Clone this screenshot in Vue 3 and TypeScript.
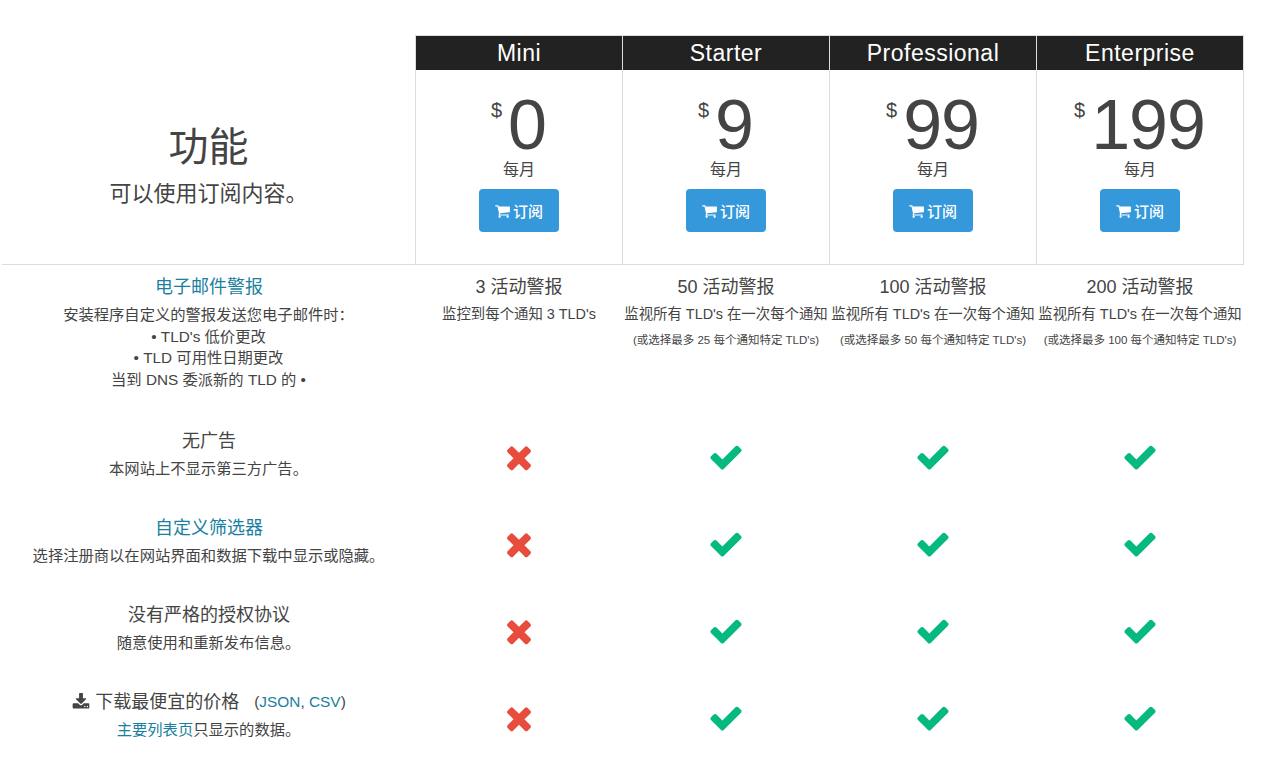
<script setup lang="ts">
interface Plan { name: string; price: string; alert: string; note: string; small?: string }
interface Row { title: string; link?: boolean; desc: string }

const plans: Plan[] = [
  { name: 'Mini', price: '0', alert: '3 活动警报', note: "监控到每个通知 3 TLD's" },
  { name: 'Starter', price: '9', alert: '50 活动警报', note: "监视所有 TLD's 在一次每个通知", small: "(或选择最多 25 每个通知特定 TLD's)" },
  { name: 'Professional', price: '99', alert: '100 活动警报', note: "监视所有 TLD's 在一次每个通知", small: "(或选择最多 50 每个通知特定 TLD's)" },
  { name: 'Enterprise', price: '199', alert: '200 活动警报', note: "监视所有 TLD's 在一次每个通知", small: "(或选择最多 100 每个通知特定 TLD's)" },
]
const rows: Row[] = [
  { title: '无广告', desc: '本网站上不显示第三方广告。' },
  { title: '自定义筛选器', link: true, desc: '选择注册商以在网站界面和数据下载中显示或隐藏。' },
  { title: '没有严格的授权协议', desc: '随意使用和重新发布信息。' },
]
const checks = [1, 2, 3]
</script>

<template>
  <div class="page">
    <div class="table">
      <div class="corner"></div>
      <div v-for="p in plans" :key="p.name" class="plan-name">{{ p.name }}</div>

      <div class="intro">
        <div class="intro-title">功能</div>
        <div class="intro-sub">可以使用订阅内容。</div>
      </div>
      <div v-for="p in plans" :key="p.name" class="price-cell">
        <div class="price"><sup class="cur">$</sup><span class="amount">{{ p.price }}</span></div>
        <div class="per">每月</div>
        <a class="btn">
          <svg class="cart" viewBox="0 0 1664 1792"><path fill="currentColor" d="M640 1536q0 52-38 90t-90 38-90-38-38-90 38-90 90-38 90 38 38 90zm896 0q0 52-38 90t-90 38-90-38-38-90 38-90 90-38 90 38 38 90zm128-1088v512q0 24-16.500 42.500t-40.500 21.500l-1044 122q13 60 13 70 0 16-24 64h920q26 0 45 19t19 45-19 45-45 19h-1024q-26 0-45-19t-19-45q0-11 8-31.500t16-36 21.500-40 15.500-29.500l-177-823h-204q-26 0-45-19t-19-45 19-45 45-19h256q16 0 28.500 6.500t19.500 15.500 13 24.500 8 26 5.500 29.500 4.500 26h1201q26 0 45 19t19 45z"/></svg>
          <span>订阅</span>
        </a>
      </div>

      <div class="feature first">
        <div class="f-title link">电子邮件警报</div>
        <div class="f-desc tall">安装程序自定义的警报发送您电子邮件时：<br />• TLD's 低价更改<br />• TLD 可用性日期更改<br />当到 DNS 委派新的 TLD 的 •</div>
      </div>
      <div v-for="p in plans" :key="p.name" class="alert-cell">
        <div class="alert-title">{{ p.alert }}</div>
        <div class="alert-note">{{ p.note }}</div>
        <div v-if="p.small" class="alert-small">{{ p.small }}</div>
      </div>

      <template v-for="r in rows" :key="r.title">
        <div class="feature">
          <div class="f-title" :class="{ link: r.link }">{{ r.title }}</div>
          <div class="f-desc">{{ r.desc }}</div>
        </div>
        <div class="mark">
          <svg class="icon no" viewBox="0 0 1408 1792"><path fill="currentColor" d="M1298 1322q0 40-28 68l-136 136q-28 28-68 28t-68-28l-294-294-294 294q-28 28-68 28t-68-28l-136-136q-28-28-28-68t28-68l294-294-294-294q-28-28-28-68t28-68l136-136q28-28 68-28t68 28l294 294 294-294q28-28 68-28t68 28l136 136q28 28 28 68t-28 68l-294 294 294 294q28 28 28 68z"/></svg>
        </div>
        <div v-for="c in checks" :key="c" class="mark">
          <svg class="icon yes" viewBox="0 0 1792 1792"><path fill="currentColor" d="M1671 566q0 40-28 68l-724 724-136 136q-28 28-68 28t-68-28l-136-136-362-362q-28-28-28-68t28-68l136-136q28-28 68-28t68 28l294 295 656-657q28-28 68-28t68 28l136 136q28 28 28 68z"/></svg>
        </div>
      </template>

      <div class="feature">
        <div class="f-title dl">
          <svg class="dl-icon" viewBox="0 0 1664 1792"><path fill="currentColor" d="M1280 1344q0-26-19-45t-45-19-45 19-19 45 19 45 45 19 45-19 19-45zm256 0q0-26-19-45t-45-19-45 19-19 45 19 45 45 19 45-19 19-45zm128-224v320q0 40-28 68t-68 28h-1472q-40 0-68-28t-28-68v-320q0-40 28-68t68-28h465l135 136q58 56 136 56t136-56l136-136h464q40 0 68 28t28 68zm-325-569q17 41-14 70l-448 448q-18 19-45 19t-45-19l-448-448q-31-29-14-70 17-39 59-39h256v-448q0-26 19-45t45-19h256q26 0 45 19t19 45v448h256q42 0 59 39z"/></svg>
          <span>下载最便宜的价格</span>
          <span class="formats">(<span class="link">JSON</span>, <span class="link">CSV</span>)</span>
        </div>
        <div class="f-desc"><span class="link">主要列表页</span>只显示的数据。</div>
      </div>
      <div class="mark">
        <svg class="icon no" viewBox="0 0 1408 1792"><path fill="currentColor" d="M1298 1322q0 40-28 68l-136 136q-28 28-68 28t-68-28l-294-294-294 294q-28 28-68 28t-68-28l-136-136q-28-28-28-68t28-68l294-294-294-294q-28-28-28-68t28-68l136-136q28-28 68-28t68 28l294 294 294-294q28-28 68-28t68 28l136 136q28 28 28 68t-28 68l-294 294 294 294q28 28 28 68z"/></svg>
      </div>
      <div v-for="c in checks" :key="c" class="mark">
        <svg class="icon yes" viewBox="0 0 1792 1792"><path fill="currentColor" d="M1671 566q0 40-28 68l-724 724-136 136q-28 28-68 28t-68-28l-136-136-362-362q-28-28-28-68t28-68l136-136q28-28 68-28t68 28l294 295 656-657q28-28 68-28t68 28l136 136q28 28 28 68z"/></svg>
      </div>
    </div>
  </div>
</template>

<style scoped>
.page {
  padding: 35px 0 0 2px;
  height: 733px;
  overflow: hidden;
  font-family: "Liberation Sans", "Noto Sans CJK SC", sans-serif;
  color: #444;
  background: #fff;
}
.table {
  display: grid;
  grid-template-columns: 413px 207px 207px 207px 208px;
  grid-template-rows: 35px 195px 150px repeat(4, 87px);
  width: 1242px;
}
.plan-name {
  background: #222;
  color: #fff;
  font-size: 23px;
  letter-spacing: 0.5px;
  text-align: center;
  line-height: 34px;
  border: 1px solid #ddd;
  border-bottom: 0;
  border-right: 0;
  box-sizing: border-box;
}
.plan-name:nth-child(5) { border-right: 1px solid #ddd; }
.intro {
  border-bottom: 1px solid #ddd;
  text-align: center;
  box-sizing: border-box;
  padding-top: 52px;
}
.intro-title { font-size: 40px; line-height: 50px; }
.intro-sub { font-size: 22px; line-height: 28px; margin-top: 8px; }
.price-cell {
  border-left: 1px solid #ddd;
  border-bottom: 1px solid #ddd;
  box-sizing: border-box;
  display: flex;
  flex-direction: column;
  align-items: center;
  padding-top: 21px;
}
.price-cell:nth-child(10) { border-right: 1px solid #ddd; }
.price { display: flex; align-items: flex-start; height: 68px; }
.cur { font-size: 20px; line-height: 20px; margin: 9px 6px 0 -1px; vertical-align: baseline; }
.amount { font-size: 70px; line-height: 68px; letter-spacing: -1px; }
.per { font-size: 16px; line-height: 20px; margin-top: 1px; }
.btn {
  margin-top: 9px;
  width: 80px;
  height: 43px;
  background: #3498db;
  border-radius: 4px;
  color: #fff;
  display: flex;
  align-items: center;
  justify-content: center;
  gap: 3px;
  font-size: 15px;
  font-weight: 500;
}
.cart { width: 15px; height: 16px; }
.feature { text-align: center; padding: 15px 0 0 1px; }
.first { padding-top: 11px; }
.f-title { font-size: 18px; line-height: 22px; }
.f-desc { font-size: 15.3px; line-height: 21px; margin: 6px 0 0 -1px; }
.f-desc.tall { line-height: 21.5px; }
.link { color: #1a7fa0; }
.dl { display: flex; justify-content: center; align-items: center; }
.dl-icon { width: 18px; height: 18px; margin-right: 5px; }
.formats { font-size: 15.4px; margin-left: 15px; }
.alert-cell { text-align: center; padding: 11px 0 0 1px; }
.alert-title { font-size: 18px; line-height: 22px; }
.alert-note { font-size: 14.4px; line-height: 20px; margin-top: 6px; white-space: nowrap; }
.alert-small { font-size: 11.5px; line-height: 18px; margin-top: 7px; white-space: nowrap; }
.mark { display: flex; justify-content: center; padding: 24px 0 0 1px; }
.mark:nth-child(5n), .alert-cell:nth-child(5n) { padding-right: 1px; }
.icon { width: 36px; height: 36px; }
.no { color: #e74c3c; }
.yes { color: #05b981; }
</style>
